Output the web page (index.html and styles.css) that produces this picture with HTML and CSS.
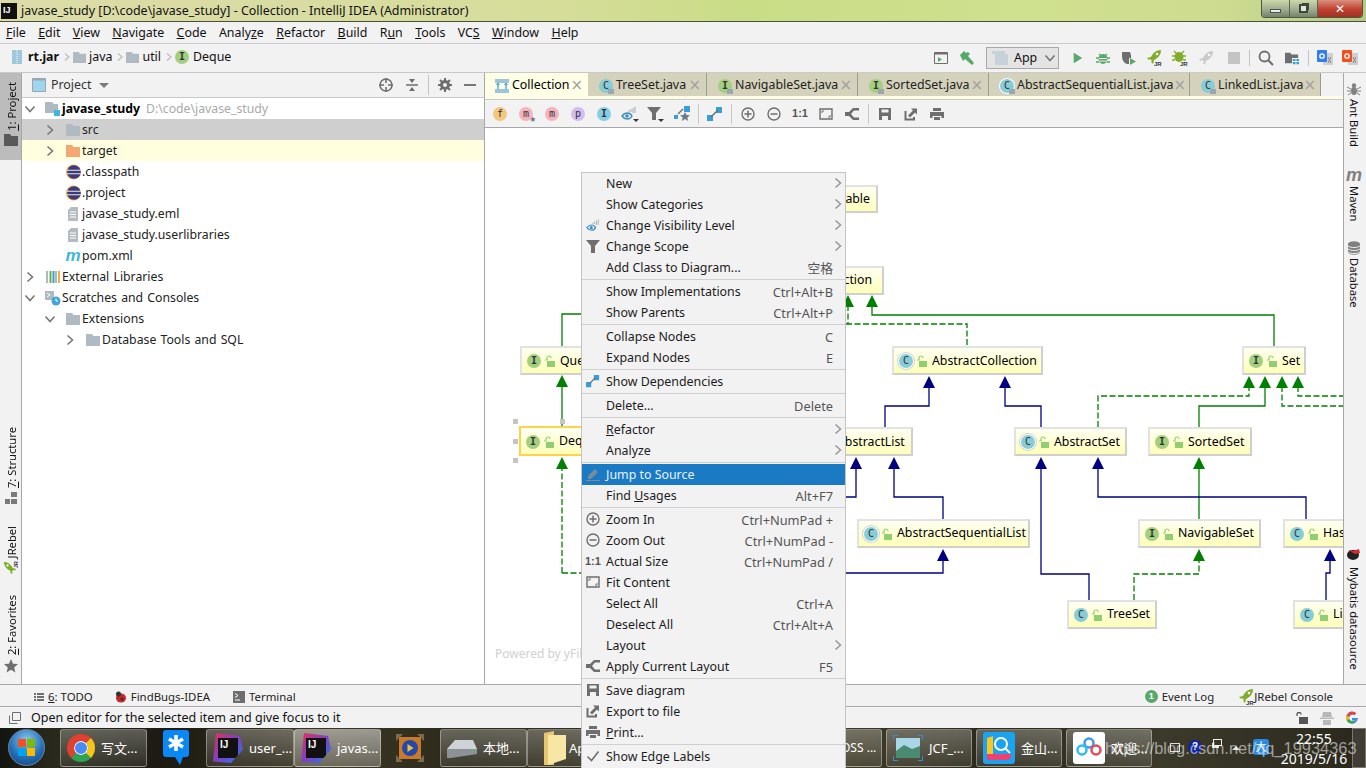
FILE: index.html
```html
<!DOCTYPE html>
<html lang="en">
<head>
<meta charset="utf-8">
<title>javase_study - Collection</title>
<link rel="stylesheet" href="styles.css">
</head>
<body>
<svg class="defs" aria-hidden="true">
  <symbol id="folder" viewBox="0 0 16 14"><path d="M1 1h6l1.500 2H15v10H1z"/></symbol>
  <symbol id="chev-r" viewBox="0 0 10 12"><path d="M2.500 1.500 7.500 6l-5 4.500" fill="none" stroke="currentColor" stroke-width="1.600"/></symbol>
  <symbol id="chev-d" viewBox="0 0 12 10"><path d="M1.500 2.500 6 7.500l4.500-5" fill="none" stroke="currentColor" stroke-width="1.600"/></symbol>
  <symbol id="eclipse" viewBox="0 0 16 16"><circle cx="8.500" cy="8" r="7.500" fill="#f0a050"/><circle cx="9" cy="8" r="6.800" fill="#3d3a78"/><path d="M2 6.300h14M2 9.700h14" stroke="#e8e8f0" stroke-width="1.100"/></symbol>
  <symbol id="file" viewBox="0 0 12 16"><path d="M4 1h7v14H1V4z" fill="#b4bcc2"/><path d="M3 6h6M3 8.500h6M3 11h6" stroke="#fff"/></symbol>
  <symbol id="save" viewBox="0 0 14 14"><path d="M1 1h12v12H1z" fill="#6e6e6e"/><path d="M3.500 2.500h7v3h-7zM4 9h6v4H4z" fill="#f2f2f2"/></symbol>
  <symbol id="export" viewBox="0 0 14 14"><path d="M1.500 4v8.500H10V10" fill="none" stroke="#6e6e6e" stroke-width="2"/><path d="M4 10l6-6M7 1.500h6v6l-2-2-5 5-2-2 5-5z" fill="#6e6e6e"/></symbol>
  <symbol id="print" viewBox="0 0 14 14"><path d="M3 1h8v3H3zM0 5h14v6h-2.500V9h-9v2H0zM4 10h6v3H4z" fill="#6e6e6e"/></symbol>
  <symbol id="zoomin" viewBox="0 0 14 14"><circle cx="7" cy="7" r="6" fill="none" stroke="#6e6e6e" stroke-width="1.400"/><path d="M3.500 7h7M7 3.500v7" stroke="#6e6e6e" stroke-width="1.500"/></symbol>
  <symbol id="zoomout" viewBox="0 0 14 14"><circle cx="7" cy="7" r="6" fill="none" stroke="#6e6e6e" stroke-width="1.400"/><path d="M3.500 7h7" stroke="#6e6e6e" stroke-width="1.500"/></symbol>
  <symbol id="fit" viewBox="0 0 14 14"><path d="M1 2h12v10H1z" fill="none" stroke="#6e6e6e" stroke-width="1.400"/><path d="M3 6V4h2M11 8v2H9" fill="none" stroke="#6e6e6e"/></symbol>
  <symbol id="layout" viewBox="0 0 14 14"><path d="M0 5h4l4-4h6v2.500H9L6 7l3 3.500h5V13H8L4 9H0z" fill="#6e6e6e"/></symbol>
  <symbol id="eye" viewBox="0 0 16 14"><path d="M1 10c3-4 8-4 10 0-2 4-7 4-10 0z" fill="none" stroke="#3f8fc0" stroke-width="1.400"/><circle cx="6" cy="10" r="1.800" fill="#3f8fc0"/><path d="M8 6V4M10 6V3M12 7V2M14 7V0.500" stroke="#aaa"/></symbol>
  <symbol id="eye-c" viewBox="0 0 18 16"><path d="M1 10c3-4 8-4 10 0-2 4-7 4-10 0z" fill="none" stroke="#3f8fc0" stroke-width="1.400"/><circle cx="6" cy="10" r="1.800" fill="#3f8fc0"/><path d="M8 6V4M10 6V3M12 7V2M14 7V0.500" stroke="#aaa"/><path d="M12 13h6l-3 3z" fill="#333"/></symbol>
  <symbol id="filter" viewBox="0 0 14 14"><path d="M0 1h14L9 7v7H5V7z" fill="#6e6e6e"/></symbol>
  <symbol id="filter-c" viewBox="0 0 18 16"><path d="M0 1h14L9 7v7H5V7z" fill="#6e6e6e"/><path d="M11 13h6l-3 3z" fill="#333"/></symbol>
  <symbol id="star" viewBox="0 0 14 14"><path d="M7 0l2 4.700 5 .4-3.800 3.300 1.200 5L7 10.700 2.600 13.400l1.200-5L0 5.100l5-.4z" fill="#6e6e6e"/></symbol>
  <symbol id="rocket" viewBox="0 0 16 16"><path d="M15 1c-5 0-8 3-10 7l-4 1 2 2 1-1 2 2-1 1 2 2 1-4c4-2 7-5 7-10z" fill="#8ab52f"/><circle cx="11" cy="5" r="1.300" fill="#fff"/></symbol>
  <symbol id="rocket-jr" viewBox="0 0 16 16"><path d="M15 0c-5 0-8 3-10 7L1 8l2 2 1-1 2 2-1 1 2 2 1-4c4-2 7-5 7-10z" fill="#7fae2a"/><circle cx="11" cy="4" r="1.300" fill="#fff"/><text x="8" y="15.500" class="jr">JR</text></symbol>
  <symbol id="bug-jr" viewBox="0 0 16 16"><ellipse cx="7" cy="7" rx="4.500" ry="5" fill="#7fae2a"/><path d="M2 1l3 3M12 1L9 4M0 6h3M11 6h3M0 10h3M11 10h3" stroke="#7fae2a" stroke-width="1.300"/><text x="8" y="15.500" class="jr">JR</text></symbol>
  <symbol id="bug" viewBox="0 0 14 14"><ellipse cx="7" cy="8" rx="4.500" ry="5" fill="#59a869"/><path d="M3 3l2 2M11 3L9 5M0 7h3M11 7h3M0 11h3M11 11h3" stroke="#59a869" stroke-width="1.300"/><path d="M3 7.500h8M3 10h8" stroke="#f2f2f2"/></symbol>
  <symbol id="lock" viewBox="0 0 11 12"><path d="M1 5h2V3a2 2 0 0 1 4 0" fill="none" stroke="#8fcf6f" stroke-width="1.200"/><path d="M3 6h8v6H3z" fill="#8fcf6f"/></symbol>
  <symbol id="blue-arrow" viewBox="0 0 16 14"><path d="M9 0h6v6H9zM0 8h6v6H0z" fill="#389fd6"/><path d="M4 10l7-7" stroke="#6e6e6e" stroke-width="1.500"/></symbol>
  <symbol id="blue-star" viewBox="0 0 16 16"><path d="M10 0h6v6h-6zM0 9h4v4H0z" fill="#389fd6"/><path d="M4 8l5-5" stroke="#6e6e6e" stroke-width="1.500"/><path d="M11 6l1.500 3 3.500.3-2.700 2.200.9 3.500-3.200-1.900-3.200 1.900.9-3.500L6 9.300 9.500 9z" fill="#6e7a88"/></symbol>
  <symbol id="translate" viewBox="0 0 16 16"><path d="M6 3h10v12H6z" fill="#d0d0d0"/><rect x="0" y="0" width="10" height="12" rx="1" fill="currentColor"/><circle cx="5" cy="6" r="2.200" fill="none" stroke="#fff" stroke-width="1.300"/><path d="M11 7l3 6M14 7l-3 6" stroke="#888"/></symbol>
</svg>

<div class="app">
  <header class="titlebar">
    <span class="ij-logo">IJ</span>
    <span class="title-text">javase_study [D:\code\javase_study] - Collection - IntelliJ IDEA (Administrator)</span>
    <div class="win-controls">
      <span class="win-btn"><i class="win-min"></i></span>
      <span class="win-btn"><i class="win-max"></i></span>
      <span class="win-btn win-close">✕</span>
    </div>
  </header>

  <nav class="menubar">
    <span><u>F</u>ile</span><span><u>E</u>dit</span><span><u>V</u>iew</span><span><u>N</u>avigate</span><span><u>C</u>ode</span><span>Analy<u>z</u>e</span><span><u>R</u>efactor</span><span><u>B</u>uild</span><span>R<u>u</u>n</span><span><u>T</u>ools</span><span>VC<u>S</u></span><span><u>W</u>indow</span><span><u>H</u>elp</span>
  </nav>

  <div class="navbar">
    <div class="crumbs">
      <svg class="jar" viewBox="0 0 10 14"><path d="M0 0h10v14H0z" fill="#9fc8dc"/><path d="M5 0v14" stroke="#fff" stroke-dasharray="1 1"/></svg>
      <b>rt.jar</b>
      <svg class="crumb-chev"><use href="#chev-r"/></svg>
      <svg class="ic-folder sm"><use href="#folder"/></svg><span>java</span>
      <svg class="crumb-chev"><use href="#chev-r"/></svg>
      <svg class="ic-folder sm"><use href="#folder"/></svg><span>util</span>
      <svg class="crumb-chev"><use href="#chev-r"/></svg>
      <span class="badge b-i">I</span><span>Deque</span>
    </div>
    <div class="run-tools">
      <svg class="t14 mr11" viewBox="0 0 14 14"><path d="M.5 1.500h13v11H.5z" fill="none" stroke="#6e6e6e"/><path d="M.5 1.500h13v2H.5z" fill="#6e6e6e"/><path d="M4 6l4 2.500L4 11z" fill="#59a869"/></svg>
      <svg class="t16 mr11" viewBox="0 0 16 16"><path d="M1 5l4-4 2 2 2-1 2 2-2 2 6 7-2 2-7-6-2 2z" fill="#59a869"/></svg>
      <div class="combo">
        <svg class="combo-ic" viewBox="0 0 16 14"><path d="M0 0h13v3H0zM3 3h13v11H3z" fill="#c6d2da"/></svg>
        <span>App</span>
        <svg class="combo-chev"><use href="#chev-d"/></svg>
      </div>
      <svg class="t12 run" viewBox="0 0 12 14"><path d="M1 1l10 6-10 6z" fill="#59a869"/></svg>
      <svg class="t14 run2"><use href="#bug"/></svg>
      <svg class="t16 run3" viewBox="0 0 16 16"><path d="M1 2h8l1 3v3H8v6H6C3 13 1 10 1 6z" fill="#6e6e6e"/><path d="M9 8l6 3.500L9 15z" fill="#59a869"/></svg>
      <svg class="t16 run4a"><use href="#rocket-jr"/></svg>
      <svg class="t16 run4"><use href="#bug-jr"/></svg>
      <svg class="t16 run4 off"><use href="#rocket"/></svg>
      <i class="stop"></i>
      <i class="vsep"></i>
      <svg class="t16 run5" viewBox="0 0 16 16"><circle cx="6.500" cy="6.500" r="5" fill="none" stroke="#6e6e6e" stroke-width="1.800"/><path d="M10 10l5 5" stroke="#6e6e6e" stroke-width="2"/></svg>
      <svg class="t14 run6" viewBox="0 0 16 16"><path d="M0 2h6l1.500 2H15v4H8v6H0z" fill="#6e6e6e"/><path d="M9 9h3v2.500H9zM13 9h3v2.500h-3zM9 12.500h3V15H9zM13 12.500h3V15h-3z" fill="#389fd6"/></svg>
      <i class="vsep s2"></i>
      <svg class="t16 tr1"><use href="#translate"/></svg>
      <svg class="t16 tr2"><use href="#translate"/></svg>
    </div>
  </div>

  <main class="workspace">
    <aside class="stripe stripe-left">
      <div class="stripe-btn active s-project"><span class="vtext"><u>1</u>: Project</span><svg class="stripe-ic dark" viewBox="0 0 14 12"><path d="M0 0h6l1.500 2H14v10H0z"/></svg></div>
      <div class="stripe-btn s-structure"><span class="vtext"><u>7</u>: Structure</span><svg class="stripe-ic" viewBox="0 0 14 14"><path d="M7 1h6v5H7zM1 8h5v5H1zM7 8h6v5H7z"/></svg></div>
      <div class="stripe-btn s-jrebel"><span class="vtext">JRebel</span><svg class="stripe-ic rot"><use href="#rocket-jr"/></svg></div>
      <div class="stripe-btn s-fav"><span class="vtext"><u>2</u>: Favorites</span><svg class="stripe-ic"><use href="#star"/></svg></div>
    </aside>

    <section class="project">
      <div class="panel-head">
        <svg class="t14" viewBox="0 0 14 14"><path d="M.5.500h13v13H.5z" fill="#9ed6ee" stroke="#9aa7b0"/><path d="M.5.500h13v2H.5z" fill="#9aa7b0"/></svg>
        <span class="panel-title">Project</span>
        <i class="caret"></i>
        <div class="panel-tools">
          <svg class="t14" viewBox="0 0 14 14"><circle cx="7" cy="7" r="6" fill="none" stroke="#6e6e6e" stroke-width="1.500"/><path d="M7 0v5M7 9v5M0 7h5M9 7h5" stroke="#6e6e6e" stroke-width="1.500"/></svg>
          <svg class="t14" viewBox="0 0 14 14"><path d="M1 7h12" stroke="#6e6e6e" stroke-width="1.500"/><path d="M4 1h6L7 5zM4 13h6L7 9z" fill="#6e6e6e"/></svg>
          <i class="vsep s3"></i>
          <svg class="t14" viewBox="0 0 14 14"><circle cx="7" cy="7" r="3.500" fill="none" stroke="#6e6e6e" stroke-width="3"/><path d="M7 0v3M7 11v3M0 7h3M11 7h3M2 2l2 2M10 10l2 2M12 2l-2 2M4 10l-2 2" stroke="#6e6e6e" stroke-width="2"/></svg>
          <i class="dash"></i>
        </div>
      </div>
      <ul class="tree">
        <li class="row l0"><svg class="tw"><use href="#chev-d"/></svg><svg class="ic16 mod" viewBox="0 0 16 16"><path d="M0 1h7l2 2h4v9H0z" fill="#aeb9c0"/><path d="M9 9h6v6H9z" fill="#40b6e0"/></svg><b>javase_study</b><span class="path">D:\code\javase_study</span></li>
        <li class="row l1 sel"><svg class="tw-r"><use href="#chev-r"/></svg><svg class="ic16 ic-folder"><use href="#folder"/></svg><span>src</span></li>
        <li class="row l1 hl"><svg class="tw-r"><use href="#chev-r"/></svg><svg class="ic16 ic-orange"><use href="#folder"/></svg><span>target</span></li>
        <li class="row leaf"><svg class="ic16"><use href="#eclipse"/></svg><span>.classpath</span></li>
        <li class="row leaf"><svg class="ic16"><use href="#eclipse"/></svg><span>.project</span></li>
        <li class="row leaf"><svg class="ic16"><use href="#file"/></svg><span>javase_study.eml</span></li>
        <li class="row leaf"><svg class="ic16"><use href="#file"/></svg><span>javase_study.userlibraries</span></li>
        <li class="row leaf"><i class="ic16 mvn">m</i><span>pom.xml</span></li>
        <li class="row l0"><svg class="tw-r"><use href="#chev-r"/></svg><svg class="ic16" viewBox="0 0 16 16"><path d="M1 2h2v12H1zM10 2h2v12h-2z" fill="#aeb9c0"/><path d="M4.500 2h2v12h-2z" fill="#62b543"/><path d="M7.500 2h2v12h-2z" fill="#389fd6"/><path d="M13 2h2v12h-2z" fill="#f4af3d"/></svg><span>External Libraries</span></li>
        <li class="row l0"><svg class="tw"><use href="#chev-d"/></svg><svg class="ic16" viewBox="0 0 16 16"><path d="M0 1h9v9H0z" fill="#aeb9c0"/><path d="M2 3l3 2-3 2" fill="none" stroke="#fff"/><circle cx="11" cy="11" r="4.500" fill="#40a5dc"/><path d="M11 8.500V11h2" stroke="#fff" fill="none"/></svg><span>Scratches and Consoles</span></li>
        <li class="row l1"><svg class="tw"><use href="#chev-d"/></svg><svg class="ic16 ic-folder"><use href="#folder"/></svg><span>Extensions</span></li>
        <li class="row l2"><svg class="tw-r"><use href="#chev-r"/></svg><svg class="ic16 ic-folder"><use href="#folder"/></svg><span>Database Tools and SQL</span></li>
      </ul>
    </section>

    <section class="editor">
      <div class="tabs">
        <div class="tab active t1"><svg class="t14" viewBox="0 0 14 14"><path d="M0 0h14v4H0zM0 10h14v4H0z" fill="#9cc4dc"/><path d="M3 10V5M11 10V5" stroke="#389fd6" stroke-width="1.300"/><path d="M1.500 6L3 4l1.500 2M9.500 6L11 4l1.500 2" fill="none" stroke="#389fd6"/></svg><span>Collection</span><i class="x">×</i></div>
        <div class="tab t2"><span class="badge b-c lk">C</span><span>TreeSet.java</span><i class="x">×</i></div>
        <div class="tab t3"><span class="badge b-i lk">I</span><span>NavigableSet.java</span><i class="x">×</i></div>
        <div class="tab t4"><span class="badge b-i lk">I</span><span>SortedSet.java</span><i class="x">×</i></div>
        <div class="tab t5"><span class="badge b-c lk abs">C</span><span>AbstractSequentialList.java</span><i class="x">×</i></div>
        <div class="tab t6"><span class="badge b-c lk">C</span><span>LinkedList.java</span><i class="x">×</i></div>
      </div>
      <div class="tab-strip"></div>
      <div class="dia-toolbar">
        <span class="tb"><span class="badge b-f">f</span></span>
        <span class="tb"><span class="badge b-m st">m</span></span>
        <span class="tb"><span class="badge b-m">m</span></span>
        <span class="tb"><span class="badge b-p">p</span></span>
        <span class="tb"><span class="badge b-t">I</span></span>
        <span class="tb"><svg class="ic18"><use href="#eye-c"/></svg></span>
        <span class="tb"><svg class="ic18"><use href="#filter-c"/></svg></span>
        <span class="tb"><svg class="ic16"><use href="#blue-star"/></svg></span>
        <i class="tsep"></i>
        <span class="tb"><svg class="ic16"><use href="#blue-arrow"/></svg></span>
        <i class="tsep"></i>
        <span class="tb"><svg class="t14"><use href="#zoomin"/></svg></span>
        <span class="tb"><svg class="t14"><use href="#zoomout"/></svg></span>
        <span class="tb one">1:1</span>
        <span class="tb"><svg class="t14"><use href="#fit"/></svg></span>
        <span class="tb"><svg class="t14"><use href="#layout"/></svg></span>
        <i class="tsep"></i>
        <span class="tb"><svg class="t14"><use href="#save"/></svg></span>
        <span class="tb"><svg class="t14"><use href="#export"/></svg></span>
        <span class="tb"><svg class="t14"><use href="#print"/></svg></span>
      </div>
      <div class="canvas">
        <svg class="edges" viewBox="485 128 858 556">
          <g class="e-green">
            <path d="M562 427V385M562 346V314H581M872 305V315H1274V346M1199 519V467M1199 427V406H1265V386"/>
          </g>
          <g class="e-green dashed">
            <path d="M562 573V467M562 573H581M848 305V324M846 324H967V346M1098 427V396H1249V386M1282 386V406H1343M1298 386V396H1343M1134 600V574H1199V559"/>
          </g>
          <g class="e-navy">
            <path d="M943 559V573H846M856 467V497H846M943 519V497H894V467M885 427V406H929V386M1041 427V406H1005V386M1041 467V574H1089V600M1098 467V497H1306V519M1330 559V573H1326V600"/>
          </g>
          <g class="a-green">
            <path d="M562 375l-6 12h12zM562 457l-6 12h12zM848 295l-6 12h12zM872 295l-6 12h12zM1199 457l-6 12h12zM1199 549l-6 12h12zM1249 376l-6 12h12zM1265 376l-6 12h12zM1282 376l-6 12h12zM1298 376l-6 12h12z"/>
          </g>
          <g class="a-navy">
            <path d="M856 457l-6 12h12zM894 457l-6 12h12zM929 376l-6 12h12zM1005 376l-6 12h12zM1041 457l-6 12h12zM1098 457l-6 12h12zM943 549l-6 12h12zM1330 549l-6 12h12z"/>
          </g>
        </svg>
        <i class="handle h1"></i><i class="handle h2"></i><i class="handle h3"></i><i class="handle h4"></i>
        <div class="node n-iter"><span class="badge b-i">I</span><svg class="nlock"><use href="#lock"/></svg><span>Iterable</span></div>
        <div class="node n-coll"><span class="badge b-i">I</span><svg class="nlock"><use href="#lock"/></svg><span>Collection</span></div>
        <div class="node n-queue"><span class="badge b-i">I</span><svg class="nlock"><use href="#lock"/></svg><span>Queue</span></div>
        <div class="node n-abscoll"><span class="badge b-c abs">C</span><svg class="nlock"><use href="#lock"/></svg><span>AbstractCollection</span></div>
        <div class="node n-set"><span class="badge b-i">I</span><svg class="nlock"><use href="#lock"/></svg><span>Set</span></div>
        <div class="node n-deque"><span class="badge b-i">I</span><svg class="nlock"><use href="#lock"/></svg><span>Deque</span></div>
        <div class="node n-abslist"><span class="badge b-c abs">C</span><svg class="nlock"><use href="#lock"/></svg><span>AbstractList</span></div>
        <div class="node n-absset"><span class="badge b-c abs">C</span><svg class="nlock"><use href="#lock"/></svg><span>AbstractSet</span></div>
        <div class="node n-sorted"><span class="badge b-i">I</span><svg class="nlock"><use href="#lock"/></svg><span>SortedSet</span></div>
        <div class="node n-absseq"><span class="badge b-c abs">C</span><svg class="nlock"><use href="#lock"/></svg><span>AbstractSequentialList</span></div>
        <div class="node n-nav"><span class="badge b-i">I</span><svg class="nlock"><use href="#lock"/></svg><span>NavigableSet</span></div>
        <div class="node n-hash"><span class="badge b-c">C</span><svg class="nlock"><use href="#lock"/></svg><span>HashSet</span></div>
        <div class="node n-tree"><span class="badge b-c">C</span><svg class="nlock"><use href="#lock"/></svg><span>TreeSet</span></div>
        <div class="node n-linked"><span class="badge b-c">C</span><svg class="nlock"><use href="#lock"/></svg><span>LinkedList</span></div>
        <span class="powered">Powered by yFiles</span>
      </div>
    </section>

    <aside class="stripe stripe-right">
      <svg class="rs-ic r-ant" viewBox="0 0 14 14"><ellipse cx="7" cy="9" rx="3" ry="4"/><circle cx="7" cy="3.500" r="2.200"/><path d="M0 5l4 2M14 5l-4 2M0 9h4M14 9h-4M1 13l3-2M13 13l-3-2" stroke="#808080"/></svg>
      <span class="vtext-r r-t1">Ant Build</span>
      <i class="mvn gray">m</i>
      <span class="vtext-r r-t2">Maven</span>
      <svg class="rs-ic r-db" viewBox="0 0 14 14"><path d="M1 2.500C3-.5 11-.5 13 2.500v9c-2 3-10 3-12 0z"/><path d="M1 5c3 2 9 2 12 0M1 8c3 2 9 2 12 0M1 11c3 2 9 2 12 0" fill="none" stroke="#f2f2f2"/></svg>
      <span class="vtext-r r-t3">Database</span>
      <svg class="rs-ic r-my" viewBox="0 0 16 14"><ellipse cx="7" cy="8" rx="6" ry="5" fill="#222"/><path d="M2 3l5 1 6-2 1 4-5 1z" fill="#d42b2b"/></svg>
      <span class="vtext-r r-t4">Mybatis datasource</span>
    </aside>
  </main>

  <div class="toolwin">
    <div class="tw-left">
      <span class="tw-item i1"><svg class="t10" viewBox="0 0 10 10"><path d="M0 1h2v2H0zM3 1h7v2H3zM0 4h2v2H0zM3 4h7v2H3zM0 7h2v2H0zM3 7h7v2H3z" fill="#6e6e6e"/></svg><span><u>6</u>: TODO</span></span>
      <span class="tw-item i2"><svg class="t12" viewBox="0 0 12 12"><ellipse cx="6" cy="7" rx="5" ry="4.500" fill="#c62828"/><circle cx="3.500" cy="3" r="2.500" fill="#333"/><circle cx="7" cy="8" r="1.500" fill="#333"/></svg><span>FindBugs-IDEA</span></span>
      <span class="tw-item i3"><svg class="t12" viewBox="0 0 12 12"><path d="M0 0h12v12H0z" fill="#6e6e6e"/><path d="M2 2.500l3 2-3 2M2 9h5" fill="none" stroke="#fff"/></svg><span>Terminal</span></span>
    </div>
    <div class="tw-right">
      <span class="tw-item i4"><span class="evt">1</span><span>Event Log</span></span>
      <span class="tw-item i5"><svg class="ic16"><use href="#rocket-jr"/></svg><span>JRebel Console</span></span>
    </div>
  </div>

  <footer class="status">
    <svg class="t12 st-ic" viewBox="0 0 12 12"><path d="M3.500.5h8v8h-8zM.5 3.500v8h8" fill="#f2f2f2" stroke="#6e6e6e"/></svg>
    <span class="st-text">Open editor for the selected item and give focus to it</span>
    <div class="st-right">
      <svg class="t12" viewBox="0 0 12 12"><path d="M1 4V2.500a2 2 0 0 1 4 0" fill="none" stroke="#555" stroke-width="1.300"/><path d="M3 5h9v7H3z" fill="#555"/></svg>
      <svg class="t14 hat" viewBox="0 0 14 14"><path d="M3 1h8l1 5H2zM0 6.500h14V8H0zM3 9h8v5H3z" fill="#b8b8b8"/></svg>
      <svg class="t14 g" viewBox="0 0 14 14"><path d="M13 7H7v2.500h3.300A3.500 3.500 0 1 1 9.500 4l1.700-1.800A6 6 0 1 0 13 7z" fill="#4285f4"/><path d="M1.800 4.200L4 6A3.500 3.500 0 0 1 9.500 4l1.700-1.800A6 6 0 0 0 1.800 4.200z" fill="#ea4335"/><path d="M1 7c0 1 .3 2 .8 2.800L4 8a3.500 3.500 0 0 1 0-2L1.800 4.200C1.300 5 1 6 1 7z" fill="#fbbc05"/><path d="M1.800 9.800A6 6 0 0 0 11 11l-2-1.500A3.500 3.500 0 0 1 4 8z" fill="#34a853"/></svg>
    </div>
  </footer>

  <div class="taskbar">
    <div class="orb"><i class="q1"></i><i class="q2"></i><i class="q3"></i><i class="q4"></i></div>
    <div class="tbtn b-chrome"><span class="chrome"></span><span>写文...</span></div>
    <div class="tfree b-ding"><svg class="ding" viewBox="0 0 26 36"><path d="M3 0h20a3 3 0 0 1 3 3v21a3 3 0 0 1-3 3h-3l-3 8-5-8H3a3 3 0 0 1-3-3V3a3 3 0 0 1 3-3z" fill="#0a88f5"/><path d="M13 5v16M6 9l14 8M20 9L6 17" stroke="#fff" stroke-width="3.500"/></svg></div>
    <div class="tbtn b-user"><span class="ij-big"><b>IJ</b></span><span>user_...</span></div>
    <div class="tbtn b-javas lit"><span class="ij-big"><b>IJ</b></span><span>javas...</span></div>
    <div class="tfree b-hs"><svg class="hs" viewBox="0 0 28 28"><path d="M3 3h22v22H3z" fill="#c87a28"/><path d="M0 0h7L0 7zM28 0v7L21 0zM0 28v-7l7 7zM28 28h-7l7-7z" fill="#7a6a50"/><circle cx="14" cy="14" r="8" fill="#2448a8"/><path d="M11.500 10l6 4-6 4z" fill="#f0c040"/></svg></div>
    <div class="tbtn b-disk"><svg class="disk" viewBox="0 0 30 22"><path d="M8 3h18l4 9H0z" fill="#cfd3d6"/><path d="M0 12h30v5L4 21H0z" fill="#8d9296"/><circle cx="26" cy="14" r="1" fill="#48c848"/></svg><span>本地...</span></div>
    <div class="tbtn b-app"><svg class="fold" viewBox="0 0 22 34"><path d="M0 2l10-2v34H0z" fill="#e8c670"/><path d="M4 4h18v24L4 34z" fill="#f8e6a4"/></svg><span>Ap</span></div>
    <div class="tbtn b-oss"><span>OSS ...</span></div>
    <div class="tbtn b-jcf"><svg class="pic" viewBox="0 0 30 26"><path d="M3 3h24v20H3z" fill="#a8d8e8"/><path d="M3 16l8-6 8 4 8-3v12H3z" fill="#4a8a70"/><path d="M0 5V0h5M25 0h5v5M30 21v5h-5M5 26H0v-5" fill="none" stroke="#3a8ad0" stroke-width="2"/></svg><span>JCF_...</span></div>
    <div class="tbtn b-jin"><svg class="app32" viewBox="0 0 32 32"><rect width="32" height="32" rx="3" fill="#1aa3ee"/><path d="M4 6l6-2v18l18 0v4l-3 2H4z" fill="#f04070"/><path d="M4 6l6-2v18H4z" fill="#f8c820"/><circle cx="18" cy="12" r="6" fill="#1aa3ee" stroke="#fff" stroke-width="2"/><path d="M22 16l5 5" stroke="#fff" stroke-width="2"/></svg><span>金山...</span></div>
    <div class="tbtn b-bd"><svg class="app32" viewBox="0 0 32 32"><rect width="32" height="32" rx="3" fill="#fff"/><circle cx="16" cy="11" r="4.500" fill="none" stroke="#3d9ae8" stroke-width="2.500"/><circle cx="9" cy="18" r="4.500" fill="none" stroke="#2ebbef" stroke-width="2.500"/><circle cx="23" cy="18" r="4.500" fill="none" stroke="#e84a5a" stroke-width="2.500"/></svg><span>欢迎...</span></div>
    <div class="tray">
      <i class="tray-kb"></i>
      <span class="tray-q">?</span>
      <i class="tray-win"></i>
      <i class="tray-up"></i>
      <span class="tray-cn">大</span>
      <div class="clock"><span>22:55</span><span>2019/5/16</span></div>
      <i class="show-desk"></i>
    </div>
    <span class="watermark">https://blog.csdn.net/qq_19934363</span>
  </div>

  <div class="ctx-menu">
    <div class="mi"><span>New</span><svg class="sub"><use href="#chev-r"/></svg></div>
    <div class="mi"><span>Show Categories</span><svg class="sub"><use href="#chev-r"/></svg></div>
    <div class="mi"><svg class="mic"><use href="#eye"/></svg><span>Change Visibility Level</span><svg class="sub"><use href="#chev-r"/></svg></div>
    <div class="mi"><svg class="mic"><use href="#filter"/></svg><span>Change Scope</span><svg class="sub"><use href="#chev-r"/></svg></div>
    <div class="mi"><span>Add Class to Diagram...</span><em>空格</em></div>
    <hr>
    <div class="mi"><span>Show Implementations</span><em>Ctrl+Alt+B</em></div>
    <div class="mi"><span>Show Parents</span><em>Ctrl+Alt+P</em></div>
    <hr>
    <div class="mi"><span>Collapse Nodes</span><em>C</em></div>
    <div class="mi"><span>Expand Nodes</span><em>E</em></div>
    <hr>
    <div class="mi"><svg class="mic"><use href="#blue-arrow"/></svg><span>Show Dependencies</span></div>
    <hr>
    <div class="mi"><span>Delete...</span><em>Delete</em></div>
    <hr>
    <div class="mi"><span><u>R</u>efactor</span><svg class="sub"><use href="#chev-r"/></svg></div>
    <div class="mi"><span>Analyze</span><svg class="sub"><use href="#chev-r"/></svg></div>
    <hr>
    <div class="mi active"><svg class="mic" viewBox="0 0 14 14"><path d="M2 9l7-7 3 3-7 7H2zM0 13h14v1H0z" fill="#7a8a98"/></svg><span>Jump to Source</span></div>
    <div class="mi"><span>Find <u>U</u>sages</span><em>Alt+F7</em></div>
    <hr>
    <div class="mi"><svg class="mic"><use href="#zoomin"/></svg><span>Zoom In</span><em>Ctrl+NumPad +</em></div>
    <div class="mi"><svg class="mic"><use href="#zoomout"/></svg><span>Zoom Out</span><em>Ctrl+NumPad -</em></div>
    <div class="mi"><b class="mic one">1:1</b><span>Actual Size</span><em>Ctrl+NumPad /</em></div>
    <div class="mi"><svg class="mic"><use href="#fit"/></svg><span>Fit Content</span></div>
    <div class="mi"><span>Select All</span><em>Ctrl+A</em></div>
    <div class="mi"><span>Deselect All</span><em>Ctrl+Alt+A</em></div>
    <div class="mi"><span>Layout</span><svg class="sub"><use href="#chev-r"/></svg></div>
    <div class="mi"><svg class="mic"><use href="#layout"/></svg><span>Apply Current Layout</span><em>F5</em></div>
    <hr>
    <div class="mi"><svg class="mic"><use href="#save"/></svg><span>Save diagram</span></div>
    <div class="mi"><svg class="mic"><use href="#export"/></svg><span>Export to file</span></div>
    <div class="mi"><svg class="mic"><use href="#print"/></svg><span><u>P</u>rint...</span></div>
    <hr>
    <div class="mi"><svg class="mic" viewBox="0 0 14 14"><path d="M1.500 7.500l4 4 7-9" fill="none" stroke="#6e6e6e" stroke-width="1.600"/></svg><span>Show Edge Labels</span></div>
  </div>
</div>
</body>
</html>
```

FILE: styles.css
```css
* { box-sizing: border-box; }
html, body { margin: 0; padding: 0; }
body { background: #f2f2f2; font: 12.4px/1 "Noto Sans", "Noto Sans CJK SC", sans-serif; color: #111; }
.defs { display: none; }
i, em { font-style: normal; }
svg { display: block; flex: none; }
.app { position: relative; width: 1366px; height: 768px; overflow: hidden; display: flex; flex-direction: column; }
.jr { font: bold 6px "Liberation Sans", sans-serif; fill: #333; }

.t10 { width: 10px; height: 10px; }
.t12 { width: 12px; height: 12px; }
.t14 { width: 14px; height: 14px; }
.t16, .ic16 { width: 16px; height: 16px; flex: none; }
.ic18 { width: 18px; height: 16px; }

/* title bar */
.titlebar { height: 22px; flex: none; display: flex; align-items: center; padding-left: 1px; border-bottom: 1px solid #47523a;
  background: linear-gradient(90deg, #dcdca8 0, #d8dca0 25%, #d6dd9a 40%, #c9dc86 55%, #cfe08e 75%, #cddb90 90%, #b6c88a 100%); }
.ij-logo { width: 16px; height: 16px; background: #111; color: #fff; font: bold 9px/15px "Liberation Sans", sans-serif; padding-left: 2px; flex: none; }
.title-text { margin-left: 4px; font-size: 12.450px; line-height: 20px; color: #111; white-space: nowrap; }
.win-controls { margin-left: auto; margin-right: 3px; align-self: flex-start; display: flex; height: 18px; width: 102px; border: 1px solid #4c5a3c; border-top: 0; border-radius: 0 0 4px 4px; overflow: hidden; }
.win-btn { width: 28px; display: flex; align-items: center; justify-content: center; background: linear-gradient(#cbd8a8, #a0ad90 55%, #75826a); border-right: 1px solid #5a6650; }
.win-close { flex: 1; background: linear-gradient(#d89080, #c04030 55%, #a03020); color: #fff; font: bold 12px/1 "DejaVu Sans", sans-serif; border: 0; }
.win-min { width: 11px; height: 4px; background: #e8eef0; border: 1px solid #49524a; margin-top: 5px; }
.win-max { width: 9px; height: 9px; border: 2px solid #3d463a; background: #dfe6d8; box-shadow: 2px -2px 0 -1px #3d463a; }

/* menu */
.menubar { height: 22px; flex: none; display: flex; align-items: center; gap: 12.400px; padding: 1px 0 0 6px; background: #f2f2f2; border-bottom: 1px solid #c9c9c9; white-space: nowrap; }

/* navigation bar */
.navbar { height: 29px; flex: none; display: flex; align-items: center; justify-content: space-between; border-bottom: 1px solid #c9c9c9; background: #f2f2f2; }
.crumbs { display: flex; align-items: center; padding: 0 0 2px 12px; }
.jar { width: 10px; height: 14px; margin-right: 6px; }
.crumb-chev { width: 8px; height: 12px; margin: 0 1px 0 4px; color: #bdbdbd; }
.ic-folder { fill: #afbac2; }
.ic-orange { fill: #f4a673; }
.sm { width: 15px; height: 13px; margin-right: 2px; }
.crumbs .badge { margin: 0 4px 0 1px; }
.run-tools { display: flex; align-items: center; padding-right: 8px; }
.mr11 { margin-right: 11px; }
.combo { width: 73px; height: 22px; display: flex; align-items: center; border: 1px solid #a8a8a8; background: #e4e4e4; padding-left: 5px; }
.combo-ic { width: 16px; height: 14px; margin-right: 6px; }
.combo-chev { width: 12px; height: 10px; margin-left: 7px; color: #777; }
.run { margin-left: 13px; }
.run2 { margin-left: 12px; }
.run3 { margin-left: 11px; }
.run4a { margin-left: 9px; }
.run4 { margin-left: 10px; }
.off { filter: grayscale(1) opacity(.5); }
.stop { width: 12px; height: 12px; background: #c4c4c4; margin-left: 14px; }
.vsep { width: 1px; height: 16px; background: #c4c4c4; margin-left: 9px; flex: none; }
.run5 { margin-left: 8px; }
.run6 { margin-left: 11px; }
.s2 { margin-left: 9px; }
.tr1 { margin-left: 8px; color: #2f7df0; }
.tr2 { margin-left: 9px; color: #f0501e; }

/* workspace */
.workspace { height: 612px; flex: none; display: flex; border-bottom: 1px solid #a8a8a8; }
.stripe { width: 22px; flex: none; background: #f2f2f2; position: relative; }
.stripe-left { display: flex; flex-direction: column; border-right: 1px solid #a8a8a8; }
.stripe-btn { display: flex; flex-direction: column; align-items: center; gap: 3px; width: 21px; padding-left: 1px; }
.vtext { writing-mode: vertical-rl; transform: rotate(180deg); font-size: 11.200px; line-height: 19px; white-space: nowrap; }
.s-project { height: 87px; padding-top: 9px; background: #bcbcbc; }
.s-structure { margin-top: 267px; }
.s-jrebel { margin-top: 21px; }
.s-fav { margin-top: 20px; }
.stripe-ic { width: 14px; height: 14px; fill: #7a7a7a; }
.stripe-ic.dark { fill: #595959; height: 12px; }
.rot { transform: rotate(-90deg); }

/* project panel */
.project { width: 463px; flex: none; background: #fff; border-right: 1px solid #a8a8a8; display: flex; flex-direction: column; }
.panel-head { height: 25px; flex: none; display: flex; align-items: center; background: #f2f2f2; border-bottom: 1px solid #c9c9c9; padding-left: 10px; }
.panel-title { margin-left: 5px; padding-top: 1px; color: #333; }
.caret { margin-left: 8px; border: 5px solid transparent; border-top: 5px solid #7a7a7a; border-bottom: 0; }
.panel-tools { margin-left: auto; display: flex; align-items: center; gap: 12px; padding-right: 8px; }
.s3 { margin-left: -3px; margin-right: -3px; height: 20px; }
.dash { width: 12px; height: 2px; background: #777; }
.tree { list-style: none; margin: 0; padding: 0; font-size: 12.250px; word-spacing: 1px; }
.row { height: 21px; display: flex; align-items: center; padding-top: 1px; white-space: nowrap; color: #222; }
.row b { font-weight: 700; color: #000; }
.row .ic16 { margin-right: 1px; }
.l0 { padding-left: 2px; }
.l1 { padding-left: 22px; }
.l2 { padding-left: 42px; }
.leaf { padding-left: 43px; }
.tw { width: 12px; height: 10px; margin-right: 9px; color: #777; }
.tw-r { width: 12px; height: 12px; margin-right: 9px; color: #777; }
.path { margin-left: 6px; color: #a9a9a9; }
.sel { background: #cfcfcf; }
.hl { background: #ffffe0; }
.mvn { font: italic bold 17px/16px "Liberation Sans", sans-serif; color: #40b6e0; text-align: center; }

/* badges */
.badge { width: 14px; height: 14px; border-radius: 50%; display: inline-flex; align-items: center; justify-content: center; flex: none; font: 10px/1 "DejaVu Sans Mono", monospace; color: #333; position: relative; }
.b-i { background: #a3cf80; font-weight: bold; }
.b-c { background: #86cdd8; }
.b-f { background: #f4c77e; }
.b-m { background: #f5b3c0; }
.b-p { background: #d3bdf0; }
.b-t { background: #84cfe5; font-weight: bold; }
.abs { box-shadow: 0 0 0 1px #fff, 0 0 0 2px #cfcfcf; }
.lk::after { content: ""; position: absolute; right: -1px; bottom: -1px; width: 6px; height: 5px; background: #9aa7b0; }
.st::after { content: "★"; position: absolute; right: -3px; bottom: -3px; font-size: 11px; color: #6e6e6e; }

/* editor */
.editor { width: 858px; flex: none; display: flex; flex-direction: column; background: #fff; }
.tabs { height: 23px; flex: none; display: flex; background: #f2f2f2; }
.tab { display: flex; align-items: center; padding-top: 2px; background: #d4d2bb; border-right: 1px solid #9c9c90; white-space: nowrap; color: #222; flex: none; }
.tab.active { background: #ffffe6; border-right: 0; color: #000; }
.tab .t14, .tab .badge { margin-right: 3px; }
.t1 { width: 103px; padding-left: 10px; }
.t2 { width: 119px; padding-left: 11px; }
.t3 { width: 151px; padding-left: 11px; }
.t4 { width: 131px; padding-left: 11px; }
.t5 { width: 201px; padding-left: 11px; }
.t6 { width: 131px; padding-left: 11px; }
.x { margin-left: auto; margin-right: 5px; font: 15px/1 "DejaVu Sans", sans-serif; color: #a0a0a0; }
.tab-strip { height: 4px; flex: none; background: #fffde6; border-bottom: 1px solid #c9c9c9; }
.dia-toolbar { height: 28px; flex: none; display: flex; align-items: center; padding-left: 2px; background: #f2f2f2; border-bottom: 1px solid #a8a8a8; }
.tb { width: 26px; flex: none; display: flex; justify-content: center; align-items: center; }
.tsep { width: 1px; height: 20px; background: #c9c9c9; margin: 0 3px; flex: none; }
.one { font: bold 11px/1 "Liberation Sans", sans-serif; color: #555; }
.canvas { flex: 1; position: relative; overflow: hidden; background: #fff; }
.edges { position: absolute; left: 0; top: 0; width: 858px; height: 556px; }
.edges g { fill: none; stroke-width: 1.300; }
.e-green { stroke: #008000; }
.e-navy { stroke: #000080; }
.dashed { stroke-dasharray: 6 2.500; }
.edges .a-green { fill: #008000; stroke: none; }
.edges .a-navy { fill: #000080; stroke: none; }

.node { position: absolute; height: 29px; display: flex; align-items: center; padding-left: 6px; white-space: nowrap; color: #000; font-size: 12.300px;
  background: linear-gradient(#fffff2, #ffffb8); border: 2px solid #e2e2e2; border-right-color: #cfcfcf; border-bottom-color: #cfcfcf; }
.node .badge { margin-left: -1px; margin-right: 3px; }
.nlock { width: 11px; height: 12px; margin-right: 5px; }
.n-iter { left: 300px; top: 57px; width: 93px; height: 28px; }
.n-coll { left: 290px; top: 138px; width: 109px; height: 29px; }
.n-queue { left: 35px; top: 218px; width: 110px; padding-top: 1px; }
.n-abscoll { left: 407px; top: 218px; width: 151px; padding-top: 1px; }
.n-set { left: 757px; top: 218px; width: 64px; padding-top: 1px; }
.n-deque { left: 34px; top: 298px; width: 110px; height: 30px; padding-top: 1px; border-color: #ffd24d; }
.n-abslist { left: 312px; top: 299px; width: 116px; padding-top: 1px; }
.n-absset { left: 529px; top: 299px; width: 113px; padding-top: 1px; }
.n-sorted { left: 663px; top: 299px; width: 104px; padding-top: 1px; }
.n-absseq { left: 372px; top: 391px; width: 173px; }
.n-nav { left: 653px; top: 391px; width: 123px; }
.n-hash { left: 798px; top: 391px; width: 100px; }
.n-tree { left: 582px; top: 472px; width: 90px; }
.n-linked { left: 808px; top: 472px; width: 100px; }
.handle { position: absolute; width: 5px; height: 5px; background: #c4c4c4; z-index: 1; }
.h1 { left: 28px; top: 291px; }
.h2 { left: 75px; top: 291px; }
.h3 { left: 28px; top: 311px; }
.h4 { left: 28px; top: 330px; }
.powered { position: absolute; left: 10px; top: 520px; color: #d0d0d0; font-size: 12px; }

/* right stripe */
.stripe-right { width: 23px; border-left: 1px solid #a8a8a8; padding-right: 2px; display: flex; flex-direction: column; align-items: center; }
.vtext-r { writing-mode: vertical-rl; font-size: 11.200px; line-height: 19px; white-space: nowrap; color: #111; }
.rs-ic { width: 14px; height: 14px; fill: #808080; }
.r-ant { margin-top: 9px; }
.r-t1 { margin-top: 3px; }
.mvn.gray { color: #808080; margin-top: 21px; font-size: 18px; height: 14px; line-height: 14px; }
.r-t2 { margin-top: 4px; }
.r-db { margin-top: 20px; }
.r-t3 { margin-top: 3px; }
.r-my { margin-top: 239px; width: 16px; }
.r-t4 { margin-top: 6px; }

/* tool window bar */
.toolwin { height: 22px; flex: none; display: flex; align-items: center; justify-content: space-between; padding-top: 2px; border-bottom: 1px solid #a8a8a8; background: #f2f2f2; font-size: 11.400px; color: #222; }
.tw-left, .tw-right { display: flex; align-items: center; }
.tw-item { display: flex; align-items: center; gap: 4px; }
.i1 { margin-left: 34px; }
.i2 { margin-left: 22px; }
.i3 { margin-left: 23px; }
.i5 { margin-left: 24px; margin-right: 33px; gap: 0; }
.evt { width: 13px; height: 13px; border-radius: 50%; background: #59a869; color: #fff; font: bold 9px/13px "Liberation Sans", sans-serif; text-align: center; }

/* status bar */
.status { height: 21px; flex: none; display: flex; align-items: center; padding: 1px 0 0 9px; background: #f2f2f2; }
.st-text { margin-left: 10px; font-size: 12.500px; }
.st-right { margin-left: auto; display: flex; align-items: center; padding-right: 7px; }
.hat { margin-left: 12px; }
.g { margin-left: 11px; }

/* taskbar */
.taskbar { height: 40px; flex: none; position: relative; display: flex; align-items: center; color: #fff; font-size: 13px;
  background: linear-gradient(90deg, #141410 0, #2a2a1c 4%, #1c1a12 12%, #3d3724 24%, #2c2a1c 34%, #45402c 60%, #2c2a1c 72%, #3c3a2a 85%, #2a281c 100%); }
.orb { position: absolute; left: 8px; top: 1px; width: 37px; height: 37px; border-radius: 50%; background: radial-gradient(circle at 50% 30%, #8ac8f0, #2470b8 55%, #123a70); border: 1px solid #6a8aa0; display: grid; grid-template-columns: 8px 8px; grid-template-rows: 8px 8px; gap: 1px; place-content: center; }
.q1 { background: #f25022; }
.q2 { background: #7fba00; }
.q3 { background: #00a4ef; }
.q4 { background: #ffb900; }
.tbtn { position: absolute; top: 1px; height: 38px; display: flex; align-items: center; gap: 6px; padding-left: 6px; border: 1px solid rgba(255, 255, 255, .35); border-radius: 3px; background: linear-gradient(rgba(255,255,255,.28), rgba(255,255,255,.08)); white-space: nowrap; overflow: hidden; }
.lit { background: linear-gradient(rgba(255,255,255,.5), rgba(255,255,255,.25)); }
.tfree { position: absolute; top: 0; height: 40px; display: flex; align-items: center; }
.b-chrome { left: 60px; width: 87px; }
.b-ding { left: 163px; }
.b-user { left: 206px; width: 88px; }
.b-javas { left: 294px; width: 87px; }
.b-hs { left: 396px; }
.b-disk { left: 440px; width: 87px; }
.b-app { left: 527px; width: 80px; gap: 3px; }
.b-oss { left: 790px; width: 92px; padding-left: 50px; font-size: 12px; }
.b-jcf { left: 886px; width: 86px; }
.b-jin { left: 976px; width: 86px; }
.b-bd { left: 1066px; width: 86px; }
.chrome { width: 28px; height: 28px; border-radius: 50%; flex: none; border: 7px solid; border-color: #e0402e #f5c518 #2ea44f #e0402e; background: #4a8af4; box-shadow: inset 0 0 0 1px #fff; }
.ding { width: 26px; height: 36px; }
.ij-big { width: 30px; height: 30px; flex: none; position: relative; background: linear-gradient(135deg, #e0305a, #8040c0 50%, #1a80f0); clip-path: polygon(10% 0, 90% 10%, 100% 55%, 60% 100%, 0 95%); display: flex; align-items: center; justify-content: center; }
.ij-big b { width: 20px; height: 20px; background: #111; color: #fff; font: bold 10px/14px "Liberation Sans", sans-serif; padding-left: 2px; }
.hs { width: 28px; height: 28px; }
.disk { width: 30px; height: 22px; }
.fold { width: 22px; height: 34px; margin-left: 10px; }
.pic { width: 30px; height: 26px; }
.app32 { width: 32px; height: 32px; }
.tray { position: absolute; left: 1170px; top: 0; right: 0; height: 40px; display: flex; align-items: center; }
.tray-kb { position: absolute; left: 0; top: 15px; width: 10px; height: 9px; border: 1px solid #ddd; }
.tray-q { position: absolute; left: 18px; top: 12px; width: 14px; height: 14px; border-radius: 50%; background: #12249a; font: bold 10px/14px "Liberation Sans", sans-serif; text-align: center; }
.tray-win { position: absolute; left: 43px; top: 11px; width: 9px; height: 7px; border: 1px solid #eee; box-shadow: -2px 3px 0 -1px #ddd; }
.tray-up { position: absolute; left: 62px; top: 18px; border: 4px solid transparent; border-bottom: 4px solid #ddd; border-top: 0; }
.tray-cn { position: absolute; left: 83px; top: 11px; width: 16px; height: 16px; border-radius: 3px; background: #2a8ae0; font-size: 11px; line-height: 16px; text-align: center; }
.clock { position: absolute; left: 113px; top: 3px; width: 62px; display: flex; flex-direction: column; align-items: center; gap: 5px; font-size: 14px; line-height: 15px; }
.show-desk { position: absolute; right: 0; top: 0; width: 14px; height: 40px; border: 1px solid rgba(255, 255, 255, .3); background: rgba(255, 255, 255, .1); }
.watermark { position: absolute; left: 1105px; top: 10px; font: 16.400px/20px "Liberation Sans", sans-serif; color: rgba(255, 255, 255, .55); white-space: nowrap; }

/* context menu */
.ctx-menu { position: absolute; left: 581px; top: 172px; width: 265px; height: 596px; background: #f2f2f2; border: 1px solid #c4c4c4; border-bottom: 0; overflow: hidden; z-index: 5; }
.ctx-menu hr { height: 3px; margin: 0; border: 0; border-top: 1px solid transparent; border-bottom: 1px solid transparent; background: #cfcfcf; background-clip: padding-box; }
.mi { position: relative; height: 21px; display: flex; align-items: center; padding: 1px 12px 0 24px; white-space: nowrap; color: #1c1c1c; }
.mi em { margin-left: auto; color: #555; font-size: 12.800px; }
.mi.active { background: #1a7ac4; color: #e8f2fa; }
.mic { position: absolute; left: 4px; top: 3px; width: 14px; height: 14px; }
b.mic { left: 3px; top: 5px; width: 16px; height: auto; }
.sub { position: absolute; right: 2px; top: 4px; width: 10px; height: 12px; color: #999; }
```
